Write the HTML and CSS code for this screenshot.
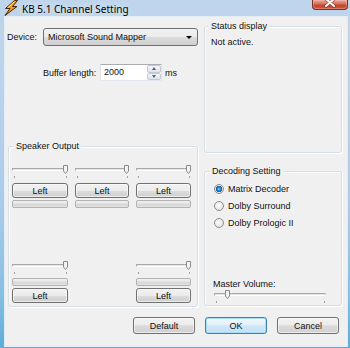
FILE: index.html
```html
<!DOCTYPE html>
<html lang="en">

<head>
    <meta charset="UTF-8">
    <title>KB 5.1 Channel Setting</title>
    <link rel="stylesheet" href="styles.css">
</head>

<body>
    <div class="window">
        <div class="titlebar">
            <svg class="app-icon" width="16" height="16" viewBox="0 0 16 16">
                <defs>
                    <linearGradient id="bolt" x1="0" y1="0" x2="1" y2="1">
                        <stop offset="0" stop-color="#ffd23a" />
                        <stop offset="0.5" stop-color="#f59a1c" />
                        <stop offset="1" stop-color="#d9620a" />
                    </linearGradient>
                </defs>
                <polygon points="11.5,0.5 2.5,8.5 7,8.5 2,15.5 14,6.5 9.5,6.5 14.5,0.5" fill="url(#bolt)" stroke="#4a2a05" stroke-width="1" stroke-linejoin="round" />
                <path d="M11 2 L5 7.5" stroke="#fff6c8" stroke-width="1" opacity="0.8" />
            </svg>
            <span class="title">KB 5.1 Channel Setting</span>
            <div class="close-btn">
                <svg width="36" height="10" viewBox="0 0 36 10">
                    <path d="M14 -1 L22 6 M22 -1 L14 6" stroke="#6a1b10" stroke-width="3.4" stroke-linecap="round" opacity="0.6" />
                    <path d="M14 -1 L22 6 M22 -1 L14 6" stroke="#fff" stroke-width="2" stroke-linecap="round" />
                </svg>
            </div>
        </div>

        <div class="client">
            <div class="main">
                <div class="col-left">
                    <div class="device-row">
                        <span class="device-label">Device:</span>
                        <div class="combo">
                            <span>Microsoft Sound Mapper</span>
                            <span class="combo-arrow"></span>
                        </div>
                    </div>

                    <div class="buffer-row">
                        <span class="buffer-label">Buffer length:</span>
                        <div class="spin-edit">
                            <span class="spin-value">2000</span>
                            <div class="spin-btns">
                                <div class="spin-btn"><span class="arrow-up"></span></div>
                                <div class="spin-btn"><span class="arrow-down"></span></div>
                            </div>
                        </div>
                        <span class="ms">ms</span>
                    </div>

                    <div class="group speaker-group">
                        <div class="group-title">Speaker Output</div>
                        <div class="speaker-grid">
                            <div class="channel">
                                <div class="slider"><div class="slider-track"></div><svg class="thumb at-max" width="5" height="9" viewBox="0 0 5 9"><path d="M0.5 0.5 H4.5 V6 L2.5 8.5 L0.5 6 Z" fill="#f4f4f4" stroke="#8a8a8a" stroke-width="1" /></svg></div>
                                <div class="btn">Left</div>
                                <div class="progress"></div>
                            </div>
                            <div class="channel">
                                <div class="slider"><div class="slider-track"></div><svg class="thumb at-max" width="5" height="9" viewBox="0 0 5 9"><path d="M0.5 0.5 H4.5 V6 L2.5 8.5 L0.5 6 Z" fill="#f4f4f4" stroke="#8a8a8a" stroke-width="1" /></svg></div>
                                <div class="btn">Left</div>
                                <div class="progress"></div>
                            </div>
                            <div class="channel">
                                <div class="slider"><div class="slider-track"></div><svg class="thumb at-max" width="5" height="9" viewBox="0 0 5 9"><path d="M0.5 0.5 H4.5 V6 L2.5 8.5 L0.5 6 Z" fill="#f4f4f4" stroke="#8a8a8a" stroke-width="1" /></svg></div>
                                <div class="btn">Left</div>
                                <div class="progress"></div>
                            </div>

                            <div class="channel rear">
                                <div class="slider"><div class="slider-track"></div><svg class="thumb at-max" width="5" height="9" viewBox="0 0 5 9"><path d="M0.5 0.5 H4.5 V6 L2.5 8.5 L0.5 6 Z" fill="#f4f4f4" stroke="#8a8a8a" stroke-width="1" /></svg></div>
                                <div class="progress"></div>
                                <div class="btn">Left</div>
                            </div>
                            <div></div>
                            <div class="channel rear">
                                <div class="slider"><div class="slider-track"></div><svg class="thumb at-max" width="5" height="9" viewBox="0 0 5 9"><path d="M0.5 0.5 H4.5 V6 L2.5 8.5 L0.5 6 Z" fill="#f4f4f4" stroke="#8a8a8a" stroke-width="1" /></svg></div>
                                <div class="progress"></div>
                                <div class="btn">Left</div>
                            </div>
                        </div>
                    </div>
                </div>

                <div class="col-right">
                    <div class="group status-group">
                        <div class="group-title">Status display</div>
                        <p class="status-text">Not active.</p>
                    </div>

                    <div class="group decoding-group">
                        <div class="group-title">Decoding Setting</div>
                        <div class="radio-list">
                            <div class="radio-row"><span class="radio checked"></span>Matrix Decoder</div>
                            <div class="radio-row"><span class="radio"></span>Dolby Surround</div>
                            <div class="radio-row"><span class="radio"></span>Dolby Prologic II</div>
                        </div>
                        <div class="master">
                            <div class="master-label">Master Volume:</div>
                            <div class="slider master-slider"><div class="slider-track"></div><svg class="thumb at-low" width="5" height="9" viewBox="0 0 5 9"><path d="M0.5 0.5 H4.5 V6 L2.5 8.5 L0.5 6 Z" fill="#f4f4f4" stroke="#8a8a8a" stroke-width="1" /></svg></div>
                        </div>
                    </div>
                </div>
            </div>

            <div class="buttons">
                <div class="btn btn-lg">Default</div>
                <div class="btn btn-lg btn-ok">OK</div>
                <div class="btn btn-lg">Cancel</div>
            </div>
        </div>
    </div>
</body>

</html>
```

FILE: styles.css
```css
* {
    margin: 0;
    padding: 0;
    box-sizing: border-box;
}

body {
    width: 350px;
    height: 348px;
    overflow: hidden;
    background: #6fb6dc;
    font-family: "Liberation Sans", Arial, sans-serif;
    font-size: 9px;
    color: #111;
}

.window {
    width: 350px;
    height: 348px;
    display: flex;
    flex-direction: column;
    padding: 0 3px 2px 5px;
    background: linear-gradient(180deg, #bfd5ec 0%, #b9d2eb 30%, #a9cbe9 60%, #86bfe3 85%, #5cadd8 100%);
}

/* Title bar */
.titlebar {
    height: 17px;
    display: flex;
    align-items: flex-start;
}

.app-icon {
    margin-left: -2px;
    flex: none;
}

.title {
    margin-left: 3px;
    align-self: center;
    font-family: "Noto Sans", "Open Sans", sans-serif;
    font-size: 10px;
    line-height: 14px;
    color: #000;
    text-shadow: 0 0 6px rgba(255, 255, 255, 0.9);
}

.close-btn {
    margin-left: auto;
    margin-right: -1px;
    width: 36px;
    height: 10px;
    border: 1px solid #7a2e22;
    border-top: none;
    border-radius: 0 0 4px 4px;
    background: linear-gradient(180deg, #e9a99c 0%, #d77560 40%, #c5452d 60%, #cc5a3f 100%);
    box-shadow: inset 0 0 0 1px rgba(255, 200, 190, 0.35);
    overflow: hidden;
}

.close-btn svg {
    display: block;
    margin-left: -1px;
}

/* Client area */
.client {
    flex: 1;
    background: #f0f0f0;
    box-shadow: 0 0 0 1px #e4ecf4;
}

.main {
    display: flex;
    height: 290px;
}

.col-left {
    width: 194px;
    padding-left: 2px;
}

.device-row {
    display: flex;
    align-items: center;
    margin-top: 11px;
    height: 18px;
}

.device-label {
    width: 36px;
}

.combo {
    width: 155px;
    height: 18px;
    display: flex;
    align-items: center;
    padding-left: 4px;
    border: 1px solid #707070;
    border-radius: 3px;
    background: linear-gradient(180deg, #f2f2f2 0%, #ebebeb 50%, #dddddd 50%, #cfcfcf 100%);
}

.combo-arrow {
    margin-left: auto;
    margin-right: 5px;
    width: 0;
    height: 0;
    border-left: 3px solid transparent;
    border-right: 3px solid transparent;
    border-top: 3px solid #000;
}

.buffer-row {
    display: flex;
    align-items: center;
    margin-top: 18px;
    height: 17px;
    padding-left: 36px;
}

.buffer-label {
    width: 57px;
}

.spin-edit {
    width: 62px;
    height: 17px;
    display: flex;
    border: 1px solid;
    border-color: #abadb3 #e2e3ea #e3e9ef #e2e3ea;
    background: #fff;
}

.spin-value {
    flex: 1;
    padding-left: 3px;
    line-height: 15px;
}

.spin-btns {
    width: 14px;
    display: flex;
    flex-direction: column;
}

.spin-btn {
    flex: 1;
    display: flex;
    align-items: center;
    justify-content: center;
    border: 1px solid #c3cad4;
    border-radius: 2px;
    background: linear-gradient(180deg, #f5f7fa 0%, #e9edf2 50%, #dce2ea 100%);
}

.arrow-up,
.arrow-down {
    width: 0;
    height: 0;
    border-left: 2.5px solid transparent;
    border-right: 2.5px solid transparent;
}

.arrow-up {
    border-bottom: 3px solid #4d6185;
}

.arrow-down {
    border-top: 3px solid #4d6185;
}

.ms {
    margin-left: 3px;
}

/* Group boxes */
.group {
    border: 1px solid #d5dfe5;
    border-radius: 3px;
    box-shadow: inset 1px 1px 0 #fff, 1px 1px 0 #fff;
}

.group-title {
    width: fit-content;
    margin-top: -7px;
    padding: 0 2px;
    line-height: 12px;
    background: #f0f0f0;
}

.speaker-group {
    margin-top: 65px;
    margin-left: 1px;
    width: 190px;
    height: 161px;
}

.speaker-group .group-title {
    margin-left: 5px;
}

.speaker-grid {
    display: grid;
    grid-template-columns: 56px 54px 55px;
    column-gap: 7px;
    row-gap: 51px;
    margin: 11px 0 0 3px;
}

.channel {
    display: flex;
    flex-direction: column;
}

/* Trackbar */
.slider {
    position: relative;
    height: 16px;
    padding-top: 5px;
}

.slider-track {
    height: 3px;
    border: 1px solid;
    border-color: #a8a8a8 #dcdcdc #fff #a8a8a8;
    background: #e6e6e6;
}

.slider::before,
.slider::after {
    content: '';
    position: absolute;
    top: 13px;
    width: 1px;
    height: 2px;
    background: #a0a0a0;
}

.slider::before {
    left: 2px;
}

.slider::after {
    right: 1px;
}

.thumb {
    position: absolute;
    top: 2px;
}

.thumb.at-max {
    right: 0;
}

.thumb.at-low {
    left: 11px;
}

/* Buttons */
.btn {
    display: flex;
    align-items: center;
    justify-content: center;
    height: 15px;
    border: 1px solid #707070;
    border-radius: 3px;
    background: linear-gradient(180deg, #f2f2f2 0%, #ebebeb 50%, #dddddd 50%, #cfcfcf 100%);
    box-shadow: inset 0 0 0 1px rgba(255, 255, 255, 0.6);
}

.channel .btn {
    margin-top: 4px;
}

.progress {
    height: 8px;
    margin-top: 2px;
    border: 1px solid #b2b2b2;
    border-radius: 2px;
    background: linear-gradient(180deg, #f1f1f1 0%, #e2e2e2 50%, #d4d4d4 51%, #e4e4e4 100%);
}

.channel.rear .progress {
    margin-top: 3px;
}

.channel.rear .btn {
    margin-top: 2px;
}

/* Right column */
.col-right {
    width: 138px;
    margin-left: 5px;
    padding-top: 9px;
}

.status-group {
    height: 127px;
}

.status-group .group-title {
    margin-left: 4px;
}

.status-text {
    margin: 4px 0 0 6px;
    line-height: 12px;
}

.decoding-group {
    margin-top: 18px;
    height: 135px;
    display: flex;
    flex-direction: column;
    padding-bottom: 1px;
}

.decoding-group .group-title {
    margin-left: 5px;
}

.radio-list {
    margin-top: 3px;
    padding-left: 9px;
}

.radio-row {
    display: flex;
    align-items: center;
    gap: 4px;
    height: 17px;
}

.radio {
    width: 10px;
    height: 10px;
    border-radius: 50%;
    border: 1px solid #8e8f8f;
    background: radial-gradient(circle at 45% 40%, #fdfdfd 0%, #e9e9e9 60%, #d4d4d4 100%);
}

.radio.checked {
    background: radial-gradient(circle at 50% 50%, #7fd0f5 0, #2f8fd6 1.5px, #1a5a9e 3px, #e2e2e2 3.5px, #f4f4f4 100%);
}

.master {
    margin-top: auto;
}

.master-label {
    padding-left: 8px;
    line-height: 12px;
}

.master-slider {
    width: 112px;
    margin: -2px 0 0 9px;
}

/* Bottom buttons */
.buttons {
    display: flex;
    justify-content: flex-end;
    gap: 10px;
    margin-top: 10px;
    padding-right: 8px;
}

.btn-lg {
    width: 62px;
    height: 17px;
}

.btn-ok {
    border-color: #3c7fb1;
    background: linear-gradient(180deg, #f0f8fd 0%, #e0f0fb 50%, #d0e8f8 50%, #c2e1f6 100%);
    box-shadow: inset 0 0 0 1px #a8dcf8;
}
```
